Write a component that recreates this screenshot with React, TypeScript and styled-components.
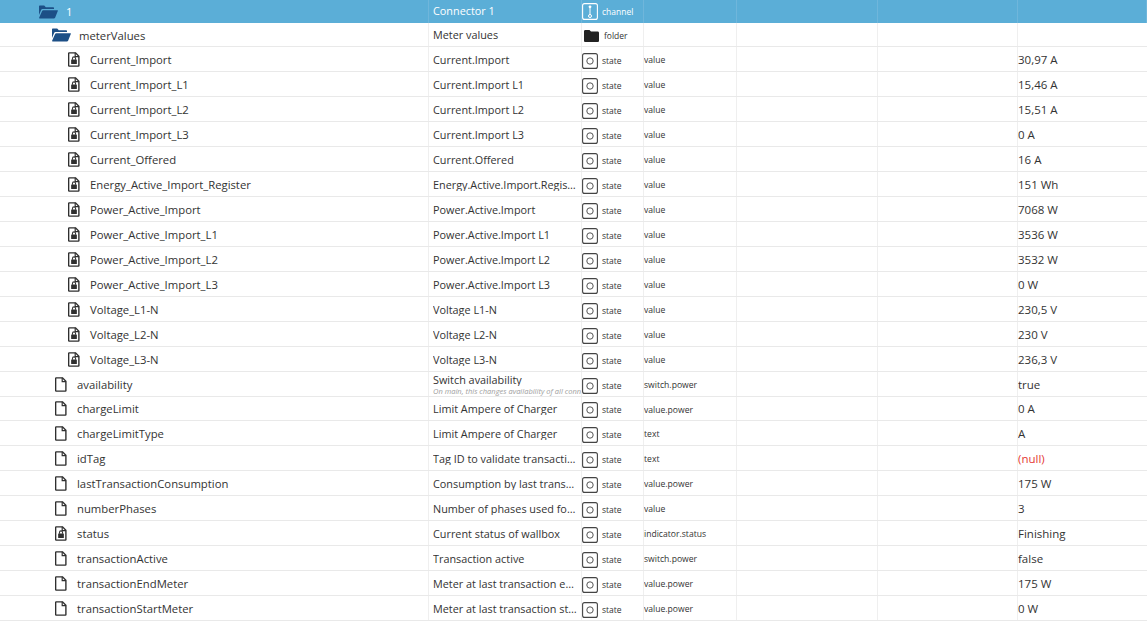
import React from "react";
import styled, { createGlobalStyle } from "styled-components";

const Global = createGlobalStyle`
  html, body { margin: 0; padding: 0; background: #fff; overflow: hidden; }
  body { font-family: "Open Sans", "Noto Sans", sans-serif; color: #333; }
`;

const COLS = "429px 153px 62px 93px 141px 140px 1fr";

const Table = styled.div`
  width: 1147px;
  height: 624px;
  overflow: hidden;
`;

const Row = styled.div<{ $h: number; $head?: boolean; $noLine?: boolean }>`
  display: grid;
  grid-template-columns: ${COLS};
  height: ${(p) => p.$h}px;
  box-sizing: border-box;
  background: ${(p) => (p.$head ? "#5baed7" : "#fff")};
  color: ${(p) => (p.$head ? "#fff" : "#333")};
  border-bottom: ${(p) => (p.$noLine ? "none" : "1px solid #e9e9e9")};
`;

const Cell = styled.div<{ $head?: boolean }>`
  display: flex;
  align-items: center;
  min-width: 0;
  box-sizing: border-box;
  overflow: hidden;
  border-right: 1px solid ${(p) => (p.$head ? "#6fb6db" : "#efefef")};
`;

const NameCell = styled(Cell)<{ $indent: number; $gap: number }>`
  padding-left: ${(p) => p.$indent}px;
  gap: ${(p) => p.$gap}px;
  font-size: 11.3px;
`;

const Txt = styled.span<{ $drop?: number }>`
  display: block;
  white-space: nowrap;
  padding-top: ${(p) => p.$drop ?? 0}px;
`;

const LabelCell = styled(Cell)<{ $lift?: number }>`
  flex-direction: column;
  align-items: flex-start;
  justify-content: center;
  padding: 0 0 ${(p) => p.$lift ?? 0}px 4px;
  font-size: 10.85px;
`;

const LabelText = styled.div<{ $drop?: number }>`
  width: 100%;
  box-sizing: border-box;
  white-space: nowrap;
  overflow: hidden;
  text-overflow: ellipsis;
  line-height: 13px;
  padding-top: ${(p) => p.$drop ?? 0}px;
  padding-right: 2px;
`;

const Hint = styled.div`
  width: 100%;
  margin-top: 1px;
  white-space: nowrap;
  overflow: hidden;
  font-size: 7.5px;
  line-height: 9px;
  font-style: italic;
  color: #a0a0a0;
`;

const TypeCell = styled(Cell)<{ $gap?: number; $pad?: number }>`
  padding-left: ${(p) => p.$pad ?? 0}px;
  gap: ${(p) => p.$gap ?? 4}px;
  font-size: 8.5px;
`;

const IconDrop = styled.span`
  display: flex;
  padding-top: 3px;
`;

const RoleCell = styled(Cell)`
  font-size: 8.6px;
  padding-top: 2px;
`;

const ValueCell = styled(Cell)<{ $null?: boolean }>`
  font-size: 11.5px;
  border-right: none;
  color: ${(p) => (p.$null ? "#e53935" : "#333")};
`;

const FolderOpen = () => (
  <svg width="20" height="14" viewBox="0 0 20 14" style={{ flex: "none" }}>
    <path fill="#1c4f86" d="M1 12V1.6C1 1 1.4.6 2 .6h4.2l1.6 1.7H15c.6 0 1 .4 1 1V4H5.2C4 4 3.3 4.5 2.9 5.4L1 10z" />
    <path fill="#1c4f86" d="M5.4 5.2H19.4c.4 0 .6.4.4.8l-2.7 6.7c-.2.5-.6.8-1.2.8H1.6c-.4 0-.6-.3-.5-.7l3-6.8c.2-.5.6-.8 1.3-.8z" />
  </svg>
);

const FileLock = () => (
  <svg width="12" height="15" viewBox="0 0 13 16" style={{ flex: "none" }}>
    <path fill="none" stroke="#2f2f2f" strokeWidth="1.5" d="M1.2.8h7l3.6 3.7v10.2c0 .3-.2.5-.5.5H1.2c-.3 0-.5-.2-.5-.5V1.3c0-.3.2-.5.5-.5z" />
    <path fill="none" stroke="#2f2f2f" strokeWidth="1.3" d="M7.8.8v4h4" />
    <rect x="3.4" y="8" width="6.2" height="4.8" rx=".6" fill="#2f2f2f" />
    <path fill="none" stroke="#2f2f2f" strokeWidth="1.1" d="M4.8 8.2V6.8c0-2.2 3.4-2.2 3.4 0v1.4" />
  </svg>
);

const FileBlank = () => (
  <svg width="12" height="15" viewBox="0 0 13 16" style={{ flex: "none" }}>
    <path fill="none" stroke="#2f2f2f" strokeWidth="1.5" d="M1.2.8h7l3.6 3.7v10.2c0 .3-.2.5-.5.5H1.2c-.3 0-.5-.2-.5-.5V1.3c0-.3.2-.5.5-.5z" />
    <path fill="none" stroke="#2f2f2f" strokeWidth="1.3" d="M7.8.8v4h4" />
  </svg>
);

const StateIcon = () => (
  <svg width="16" height="16" viewBox="0 0 16 16" style={{ flex: "none" }}>
    <rect x=".6" y=".6" width="14.8" height="14.8" rx="2" fill="none" stroke="#444" strokeWidth="1.1" />
    <circle cx="8" cy="8" r="3.2" fill="none" stroke="#555" strokeWidth="1" />
  </svg>
);

const ChannelIcon = () => (
  <svg width="16" height="17" viewBox="0 0 16 17" style={{ flex: "none" }}>
    <rect x=".6" y=".6" width="14.8" height="15.8" rx="2" fill="none" stroke="#fff" strokeWidth="1.1" />
    <circle cx="8" cy="3.8" r="1.4" fill="#fff" />
    <path d="M8 4v8" stroke="#fff" strokeWidth="1" />
    <circle cx="8" cy="13" r="1.5" fill="none" stroke="#fff" strokeWidth="1" />
  </svg>
);

const FolderSolid = () => (
  <svg width="15" height="12" viewBox="0 0 15 12" style={{ flex: "none" }}>
    <path fill="#222" d="M1.3 0h4.2l1.5 1.6h6.7c.7 0 1.3.6 1.3 1.3v7.8c0 .7-.6 1.3-1.3 1.3H1.3C.6 12 0 11.4 0 10.7V1.3C0 .6.6 0 1.3 0z" />
  </svg>
);

type Item = {
  name: string;
  label: string;
  hint?: string;
  role: string;
  value: string;
  locked?: boolean;
  isNull?: boolean;
  h?: number;
};

const meter: Item[] = [
  ["Current_Import", "Current.Import", "30,97 A"],
  ["Current_Import_L1", "Current.Import L1", "15,46 A"],
  ["Current_Import_L2", "Current.Import L2", "15,51 A"],
  ["Current_Import_L3", "Current.Import L3", "0 A"],
  ["Current_Offered", "Current.Offered", "16 A"],
  ["Energy_Active_Import_Register", "Energy.Active.Import.Register", "151 Wh"],
  ["Power_Active_Import", "Power.Active.Import", "7068 W"],
  ["Power_Active_Import_L1", "Power.Active.Import L1", "3536 W"],
  ["Power_Active_Import_L2", "Power.Active.Import L2", "3532 W"],
  ["Power_Active_Import_L3", "Power.Active.Import L3", "0 W"],
  ["Voltage_L1-N", "Voltage L1-N", "230,5 V"],
  ["Voltage_L2-N", "Voltage L2-N", "230 V"],
  ["Voltage_L3-N", "Voltage L3-N", "236,3 V"],
].map(([name, label, value]) => ({ name, label, value, role: "value", locked: true }));

const others: Item[] = [
  { name: "availability", label: "Switch availability", hint: "On main, this changes availability of all connectors", role: "switch.power", value: "true" },
  { name: "chargeLimit", label: "Limit Ampere of Charger", role: "value.power", value: "0 A", h: 24 },
  { name: "chargeLimitType", label: "Limit Ampere of Charger", role: "text", value: "A" },
  { name: "idTag", label: "Tag ID to validate transaction", role: "text", value: "(null)", isNull: true },
  { name: "lastTransactionConsumption", label: "Consumption by last transaction", role: "value.power", value: "175 W" },
  { name: "numberPhases", label: "Number of phases used for charging", role: "value", value: "3" },
  { name: "status", label: "Current status of wallbox", role: "indicator.status", value: "Finishing", locked: true },
  { name: "transactionActive", label: "Transaction active", role: "switch.power", value: "false" },
  { name: "transactionEndMeter", label: "Meter at last transaction end value", role: "value.power", value: "175 W" },
  { name: "transactionStartMeter", label: "Meter at last transaction start", role: "value.power", value: "0 W" },
];

const StateRow = ({ item, indent, drop }: { item: Item; indent: number; drop: number }) => (
  <Row $h={item.h ?? 25}>
    <NameCell $indent={indent} $gap={10}>
      {item.locked ? <FileLock /> : <FileBlank />}
      <Txt $drop={drop}>{item.name}</Txt>
    </NameCell>
    <LabelCell>
      <LabelText $drop={item.hint ? 0 : drop}>{item.label}</LabelText>
      {item.hint && <Hint>{item.hint}</Hint>}
    </LabelCell>
    <TypeCell>
      <IconDrop>
        <StateIcon />
      </IconDrop>
      <Txt $drop={2}>state</Txt>
    </TypeCell>
    <RoleCell>{item.role}</RoleCell>
    <Cell />
    <Cell />
    <ValueCell $null={item.isNull}>
      <Txt $drop={drop}>{item.value}</Txt>
    </ValueCell>
  </Row>
);

export default function App() {
  return (
    <Table>
      <Global />
      <Row $h={23} $head $noLine>
        <NameCell $head $indent={38} $gap={8}>
          <FolderOpen />
          <span>1</span>
        </NameCell>
        <LabelCell $head $lift={2}>
          <LabelText>Connector 1</LabelText>
        </LabelCell>
        <TypeCell $head>
          <ChannelIcon />
          <Txt>channel</Txt>
        </TypeCell>
        <Cell $head />
        <Cell $head />
        <Cell $head />
        <Cell $head />
      </Row>
      <Row $h={24}>
        <NameCell $indent={51} $gap={8}>
          <FolderOpen />
          <Txt $drop={1}>meterValues</Txt>
        </NameCell>
        <LabelCell>
          <LabelText>Meter values</LabelText>
        </LabelCell>
        <TypeCell $gap={5} $pad={2}>
          <IconDrop>
            <FolderSolid />
          </IconDrop>
          <Txt $drop={2}>folder</Txt>
        </TypeCell>
        <RoleCell />
        <Cell />
        <Cell />
        <ValueCell />
      </Row>
      {meter.map((m, i) => (
        <StateRow key={m.name} item={m} indent={68} drop={i < 7 ? 1 : 0} />
      ))}
      {others.map((m) => (
        <StateRow key={m.name} item={m} indent={55} drop={m.h || m.name === "availability" ? 0 : 1} />
      ))}
    </Table>
  );
}
